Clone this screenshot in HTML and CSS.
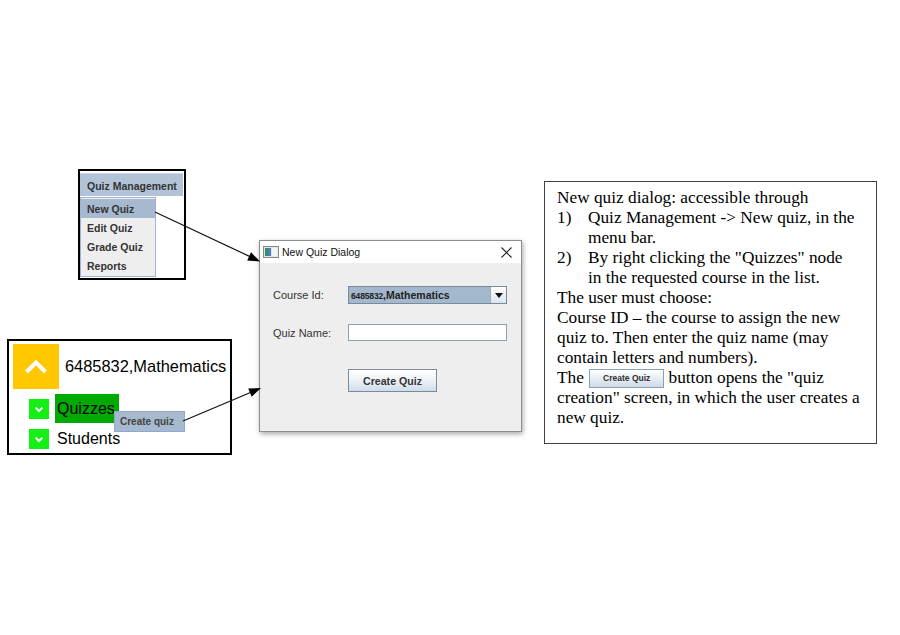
FILE: index.html
```html
<!DOCTYPE html>
<html>
<head>
<meta charset="utf-8">
<title>New Quiz Dialog</title>
<link rel="stylesheet" href="styles.css">
</head>
<body>
<div class="canvas">

  <div class="menu-box">
    <div class="menubar">Quiz Management</div>
    <div class="dropdown">
      <div class="item active">New Quiz</div>
      <div class="item">Edit Quiz</div>
      <div class="item">Grade Quiz</div>
      <div class="item">Reports</div>
    </div>
  </div>

  <div class="tree-box">
    <div class="tree-head">
      <div class="toggle-big">
        <svg width="46" height="45" viewBox="0 0 46 45"><polyline points="13.5,28 23,18.5 32.5,28" fill="none" stroke="#fff" stroke-width="4"/></svg>
      </div>
      <span class="course">6485832,Mathematics</span>
    </div>
    <div class="tree-row">
      <div class="toggle-small">
        <svg width="20" height="20" viewBox="0 0 20 20"><polyline points="6.5,8.5 10,12 13.5,8.5" fill="none" stroke="#fff" stroke-width="2"/></svg>
      </div>
      <span class="node-label selected">Quizzes</span>
    </div>
    <div class="tree-row row2">
      <div class="toggle-small">
        <svg width="20" height="20" viewBox="0 0 20 20"><polyline points="6.5,8.5 10,12 13.5,8.5" fill="none" stroke="#fff" stroke-width="2"/></svg>
      </div>
      <span class="node-label">Students</span>
    </div>
  </div>

  <div class="popup">Create quiz</div>

  <div class="dialog">
    <div class="titlebar">
      <svg class="app-icon" width="16" height="12" viewBox="0 0 16 12">
        <rect x="0.5" y="0.5" width="15" height="11" fill="#e4e4e4" stroke="#8a8a8a"/>
        <rect x="2" y="2" width="3" height="8" fill="#2f8f6f"/>
        <rect x="5" y="2" width="3" height="8" fill="#4a7fb8"/>
        <rect x="9" y="2" width="5" height="8" fill="#f4f4f4"/>
      </svg>
      <span class="title">New Quiz Dialog</span>
      <svg class="close" width="11" height="11" viewBox="0 0 11 11"><path d="M0.5 0.5 L10.5 10.5 M10.5 0.5 L0.5 10.5" stroke="#222" stroke-width="1.1" fill="none"/></svg>
    </div>
    <div class="dialog-body">
      <div class="form-row">
        <span class="label">Course Id:</span>
        <div class="combo">
          <span class="combo-text"><span class="digits">6485832</span>,Mathematics</span>
          <span class="combo-btn"><svg width="8" height="5" viewBox="0 0 8 5"><path d="M0 0 L8 0 L4 5 Z" fill="#111"/></svg></span>
        </div>
      </div>
      <div class="form-row row-name">
        <span class="label">Quiz Name:</span>
        <div class="textfield"></div>
      </div>
      <div class="form-row row-btn">
        <span class="label"></span>
        <div class="button">Create Quiz</div>
      </div>
    </div>
  </div>

  <div class="note">
    <div class="line">New quiz dialog: accessible through</div>
    <div class="li"><span class="n">1)</span><span class="t">Quiz Management -&gt; New quiz, in the<br>menu bar.</span></div>
    <div class="li"><span class="n">2)</span><span class="t">By right clicking the "Quizzes" node<br>in the requested course in the list.</span></div>
    <div class="line">The user must choose:</div>
    <div class="line">Course ID – the course to assign the new<br>quiz to. Then enter the quiz name (may<br>contain letters and numbers).</div>
    <div class="line">The <span class="mini-btn">Create Quiz</span> button opens the "quiz<br>creation" screen, in which the user creates a<br>new quiz.</div>
  </div>

  <svg class="arrows" width="900" height="635" viewBox="0 0 900 635">
    <line x1="155" y1="212" x2="250" y2="256.6" stroke="#111" stroke-width="1.2"/>
    <polygon points="260,261.5 247.2,260.5 251,252.3" fill="#000"/>
    <line x1="183" y1="421" x2="250.5" y2="392.5" stroke="#111" stroke-width="1.2"/>
    <polygon points="261,388 251.7,396.8 248.2,388.5" fill="#000"/>
  </svg>

</div>
</body>
</html>
```

FILE: styles.css
```css
* { box-sizing: border-box; }

html, body {
  margin: 0;
  padding: 0;
  background: #ffffff;
}

.canvas {
  position: relative;
  width: 900px;
  height: 635px;
  overflow: hidden;
  font-family: "Liberation Sans", Arial, sans-serif;
}

/* ---------- menu ---------- */
.menu-box {
  position: absolute;
  left: 78px;
  top: 169px;
  width: 108px;
  height: 111px;
  border: 2px solid #000;
  background: #fff;
  padding: 2px 1px 0 0;
}

.menubar {
  height: 24px;
  line-height: 24px;
  padding-left: 7px;
  background: #b2c3d7;
  border-top: 1px solid #c9d5e3;
  border-bottom: 1px solid #ffffff;
  font-weight: bold;
  font-size: 10.5px;
  color: #333;
  white-space: nowrap;
}

.dropdown {
  width: 76px;
  border: 1px solid #9fb4d8;
  background: #eeeeee;
  padding: 1px 0;
  display: flex;
  flex-direction: column;
}

.item {
  height: 19px;
  line-height: 20px;
  padding-left: 6px;
  font-weight: bold;
  font-size: 10.5px;
  color: #333;
  white-space: nowrap;
}

.item.active {
  background: #a6b9cf;
}

/* ---------- tree ---------- */
.tree-box {
  position: absolute;
  left: 7px;
  top: 339px;
  width: 225px;
  height: 116px;
  border: 2px solid #000;
  background: #fff;
  padding: 3px 0 0 4px;
}

.tree-head {
  display: flex;
  align-items: center;
  gap: 6px;
}

.toggle-big {
  width: 46px;
  height: 45px;
  background: #ffc800;
  flex: none;
}

.toggle-big svg, .toggle-small svg { display: block; }

.course {
  font-size: 16.4px;
  color: #000;
  white-space: nowrap;
}

.tree-row {
  display: flex;
  align-items: center;
  gap: 6px;
  height: 29px;
  margin-top: 5px;
  margin-left: 16px;
}

.tree-row.row2 {
  height: 20px;
  margin-top: 6px;
}

.toggle-small {
  width: 20px;
  height: 20px;
  background: #14f014;
  flex: none;
}

.node-label {
  font-size: 16px;
  color: #000;
  padding-left: 2px;
  white-space: nowrap;
}

.node-label.selected {
  width: 64px;
  height: 29px;
  line-height: 29px;
  background: #00aa00;
}

.popup {
  position: absolute;
  left: 114px;
  top: 411px;
  width: 71px;
  height: 21px;
  background: #a6b9cf;
  border: 1px solid #8fa9d2;
  padding-left: 5px;
  line-height: 20px;
  font-weight: bold;
  font-size: 10px;
  color: #444;
  white-space: nowrap;
}

/* ---------- dialog ---------- */
.dialog {
  position: absolute;
  left: 259px;
  top: 240px;
  width: 263px;
  height: 192px;
  border: 1px solid #8c8c8c;
  background: #eeeeee;
  box-shadow: 1px 2px 5px rgba(0, 0, 0, 0.35);
  display: flex;
  flex-direction: column;
}

.titlebar {
  height: 22px;
  background: #ffffff;
  display: flex;
  align-items: center;
  padding: 0 9px 0 3px;
  gap: 3px;
  flex: none;
}

.app-icon { display: block; flex: none; }

.title {
  font-size: 10.5px;
  color: #111;
  white-space: nowrap;
}

.close {
  display: block;
  margin-left: auto;
}

.dialog-body {
  padding: 23px 0 0 13px;
  display: flex;
  flex-direction: column;
}

.form-row {
  display: flex;
  align-items: center;
}

.row-name { margin-top: 20px; }
.row-btn { margin-top: 28px; }

.label {
  width: 75px;
  flex: none;
  font-size: 11px;
  color: #333;
  white-space: nowrap;
}

.combo {
  width: 159px;
  height: 18px;
  border: 1px solid #7a8a99;
  background: #a3b8cc;
  display: flex;
  align-items: center;
}

.combo-text {
  flex: 1;
  padding-left: 2px;
  font-weight: bold;
  font-size: 10.5px;
  color: #222;
  white-space: nowrap;
}

.digits {
  font-size: 8.6px;
  letter-spacing: -0.2px;
}

.combo-btn {
  width: 16px;
  height: 16px;
  background: linear-gradient(#ffffff, #dbe5ef);
  border-left: 1px solid #9aabbb;
  display: flex;
  align-items: center;
  justify-content: center;
}

.combo-btn svg { display: block; }

.textfield {
  width: 159px;
  height: 17px;
  background: #ffffff;
  border: 1px solid #8fa0b0;
}

.button {
  width: 89px;
  height: 23px;
  border: 1px solid #7a8a99;
  background: linear-gradient(#ffffff 0%, #eef3f8 45%, #cfdcea 100%);
  font-weight: bold;
  font-size: 10.6px;
  color: #333;
  display: flex;
  align-items: center;
  justify-content: center;
  white-space: nowrap;
}

/* ---------- note ---------- */
.note {
  position: absolute;
  left: 544px;
  top: 181px;
  width: 333px;
  height: 263px;
  border: 1px solid #404040;
  background: #fff;
  padding: 6px 4px 0 12px;
  font-family: "Liberation Serif", "Times New Roman", serif;
  font-size: 17.3px;
  line-height: 20px;
  color: #000;
}

.line, .li { white-space: nowrap; }

.li { display: flex; }

.li .n {
  width: 31px;
  flex: none;
}

.mini-btn {
  display: inline-block;
  vertical-align: top;
  margin: 1px 0 0 1px;
  width: 75px;
  height: 19px;
  border: 1px solid #8aa0b8;
  background: linear-gradient(#ffffff, #e6edf4 50%, #cfdae6);
  font-family: "Liberation Sans", Arial, sans-serif;
  font-weight: bold;
  font-size: 8.5px;
  line-height: 17px;
  text-align: center;
  color: #333;
}

/* ---------- arrows ---------- */
.arrows {
  position: absolute;
  left: 0;
  top: 0;
  pointer-events: none;
}
```
